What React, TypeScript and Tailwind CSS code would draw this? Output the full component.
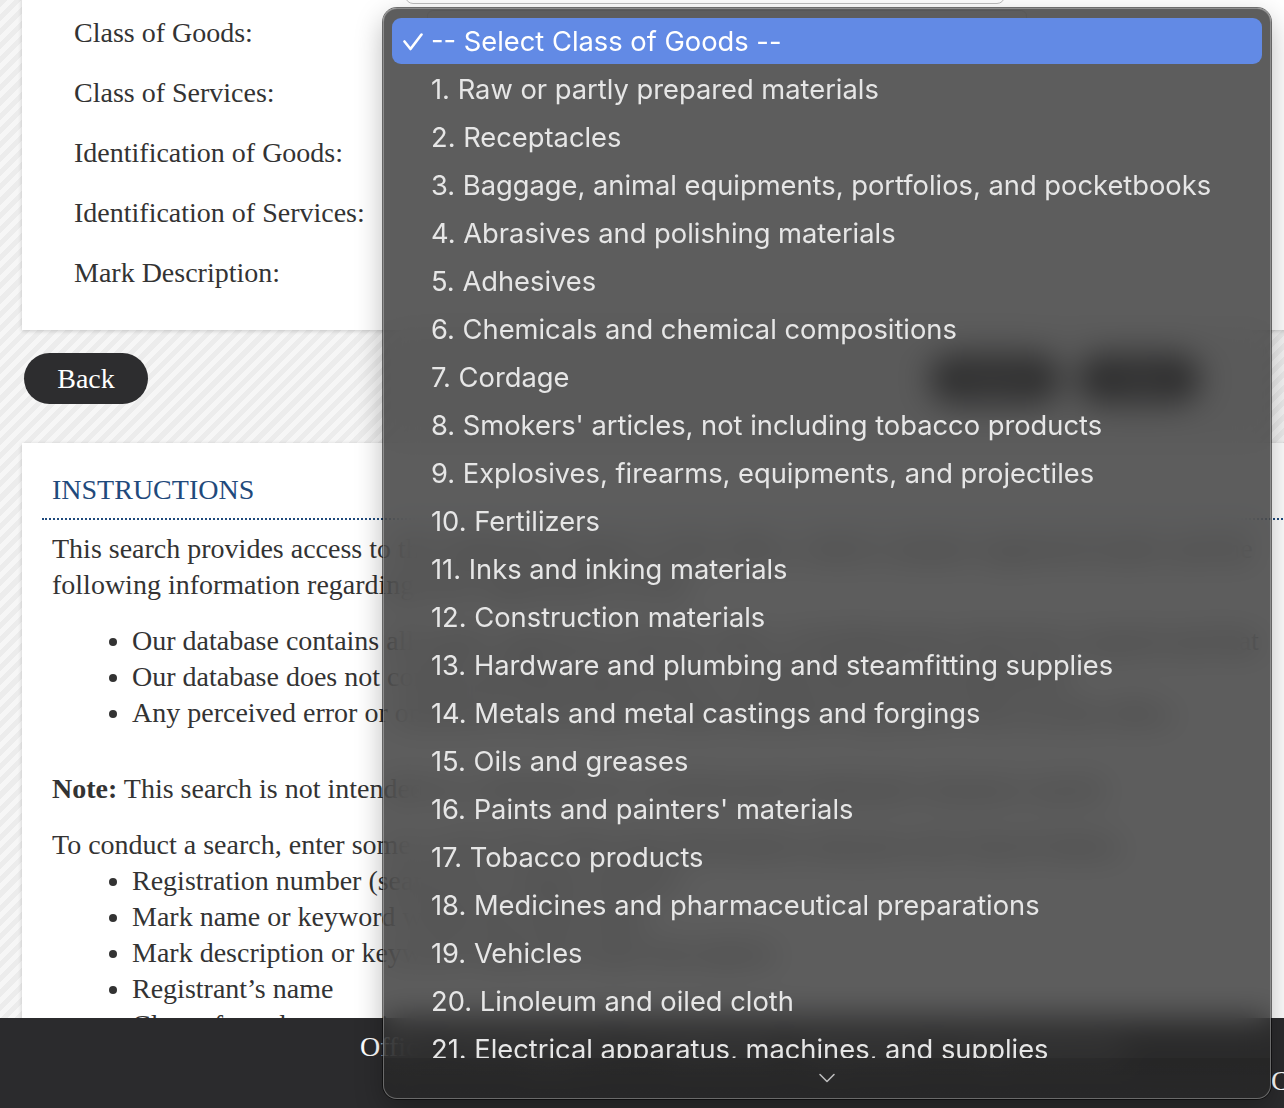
import React from "react";

const serif = "font-['Liberation_Serif','Times_New_Roman',serif]";

const classes = [
  "-- Select Class of Goods --",
  "1. Raw or partly prepared materials",
  "2. Receptacles",
  "3. Baggage, animal equipments, portfolios, and pocketbooks",
  "4. Abrasives and polishing materials",
  "5. Adhesives",
  "6. Chemicals and chemical compositions",
  "7. Cordage",
  "8. Smokers' articles, not including tobacco products",
  "9. Explosives, firearms, equipments, and projectiles",
  "10. Fertilizers",
  "11. Inks and inking materials",
  "12. Construction materials",
  "13. Hardware and plumbing and steamfitting supplies",
  "14. Metals and metal castings and forgings",
  "15. Oils and greases",
  "16. Paints and painters' materials",
  "17. Tobacco products",
  "18. Medicines and pharmaceutical preparations",
  "19. Vehicles",
  "20. Linoleum and oiled cloth",
  "21. Electrical apparatus, machines, and supplies",
  "22. Games, toys, and sporting goods",
  "23. Cutlery, machinery, and tools, and parts thereof",
];

const fields = [
  "Class of Goods:",
  "Class of Services:",
  "Identification of Goods:",
  "Identification of Services:",
  "Mark Description:",
];

function FieldRow({ label }: { label: string }) {
  return (
    <div className="flex h-[60px] items-center">
      <div className="w-[383px] pl-[52px] text-[28px] text-[#333]">{label}</div>
      <div className="ml-[22px] h-[46px] w-[600px] rounded-md border border-[#c8c8c8] bg-white" />
    </div>
  );
}

function SelectMenu() {
  return (
    <div className="absolute left-[383px] top-[8px] flex h-[1091px] w-[888px] flex-col overflow-hidden rounded-[14px] border border-white/30 bg-[rgba(42,42,42,0.76)] shadow-[0_0_0_1px_rgba(0,0,0,0.55),0_10px_28px_rgba(0,0,0,0.28)] backdrop-blur-lg font-['Inter','Liberation_Sans',sans-serif]">
      <div className="h-[1049px] overflow-hidden px-[8px] pt-[8px]">
        {classes.map((c, i) => (
          <div key={c} className="h-[48px] py-px">
            <div
              className={
                i === 0
                  ? "relative flex h-full items-center rounded-[9px] bg-[#628ae5] pl-[39px] pt-[3px] text-[27.3px] text-white"
                  : "flex h-full items-center pl-[39px] pt-[3px] text-[27.3px] text-[#e6e6e6]"
              }
            >
              {i === 0 && (
                <svg className="absolute left-[11px] top-[15px]" width="20" height="18" viewBox="0 0 20 18" fill="none">
                  <path d="M1.5 8.5 L7.5 16 L18.5 1.5" stroke="white" strokeWidth="2.6" strokeLinecap="round" strokeLinejoin="round" />
                </svg>
              )}
              {c}
            </div>
          </div>
        ))}
      </div>
      <div className="relative flex flex-1 items-center justify-center bg-gradient-to-b from-black/10 to-black/5">
        <svg width="18" height="10" viewBox="0 0 18 10" fill="none">
          <path d="M2 1.5 L9 8.5 L16 1.5" stroke="#bdbdbd" strokeWidth="1.6" strokeLinecap="round" strokeLinejoin="round" />
        </svg>
      </div>
    </div>
  );
}

export default function App() {
  return (
    <div className="relative h-[1108px] w-[1284px] overflow-hidden bg-[#eeeeee] bg-[repeating-linear-gradient(135deg,#ececec_0px,#ececec_5px,#f6f6f6_5px,#f6f6f6_10px)]">
      <div className={`flex h-full flex-col ${serif}`}>
        {/* search form */}
        <div className="ml-[22px] -mt-[60px] w-[1400px] bg-white pb-[27px] pt-[3px] shadow-[0_1px_4px_rgba(0,0,0,0.18)]">
          <div className="flex h-[60px] items-start">
            <div className="ml-[383px] mt-[5px] h-[56px] w-[600px] rounded-lg border border-[#bdbdbd] bg-white" />
          </div>
          {fields.map((f) => (
            <FieldRow key={f} label={f} />
          ))}
        </div>

        <div className="mt-[23px] flex items-center">
          <button className="ml-[24px] h-[51px] w-[124px] rounded-full bg-[#2d2d2f] text-[28px] text-white">Back</button>
          <div className="ml-auto mr-[84px] flex gap-[18px]">
            <button className="h-[48px] w-[130px] rounded-full bg-[#2d2d2f] text-[28px] text-white">Search</button>
            <button className="h-[48px] w-[122px] rounded-full bg-[#2d2d2f] text-[28px] text-white">Clear</button>
          </div>
        </div>

        {/* instructions */}
        <div className="ml-[22px] mt-[39px] w-[1400px] flex-1 bg-white pl-[20px] pt-[29px] text-[28px] leading-[36px] text-[#333] shadow-[0_1px_4px_rgba(0,0,0,0.18)]">
          <h2 className="border-b-2 border-dotted border-[#1f4a7c] pb-[10px] pl-[10px] text-[28px] text-[#1f4a7c]">INSTRUCTIONS</h2>
          <div className="pl-[10px]">
            <p className="mt-[11px] w-[1240px]">
              This search provides access to the trademark registry of the office, which contains registered marks and the
              following information regarding each registration on file.
            </p>
            <ul className="mt-[20px] list-disc whitespace-nowrap pl-[80px]">
              <li>Our database contains all marks registered with the office, including those that have expired and that</li>
              <li>Our database does not contain pending applications or marks that are not registered.</li>
              <li>Any perceived error or omission in the search results should be reported to the records office.</li>
            </ul>
            <p className="mt-[40px] whitespace-nowrap">
              <b>Note:</b> This search is not intended as a substitute for a professional trademark clearance search.
            </p>
            <p className="mt-[20px] whitespace-nowrap">To conduct a search, enter some or all of the following information and press the Search button.</p>
            <ul className="list-disc whitespace-nowrap pl-[80px]">
              <li>Registration number (search by a single number)</li>
              <li>Mark name or keyword within the mark name</li>
              <li>Mark description or keyword within the mark description</li>
              <li>Registrant’s name</li>
              <li>Class of goods or services</li>
            </ul>
          </div>
        </div>
      </div>

      {/* footer */}
      <div className={`absolute bottom-0 left-0 h-[90px] w-full bg-[#2b2b2d] text-[28px] leading-[34px] text-white ${serif}`}>
        <div className="whitespace-nowrap pl-[360px] pt-[12px]">Office of the Registrar of Trademarks, Department of State Services</div>
        <div className="whitespace-nowrap pl-[1271px]">Copyright</div>
      </div>

      <SelectMenu />
    </div>
  );
}
